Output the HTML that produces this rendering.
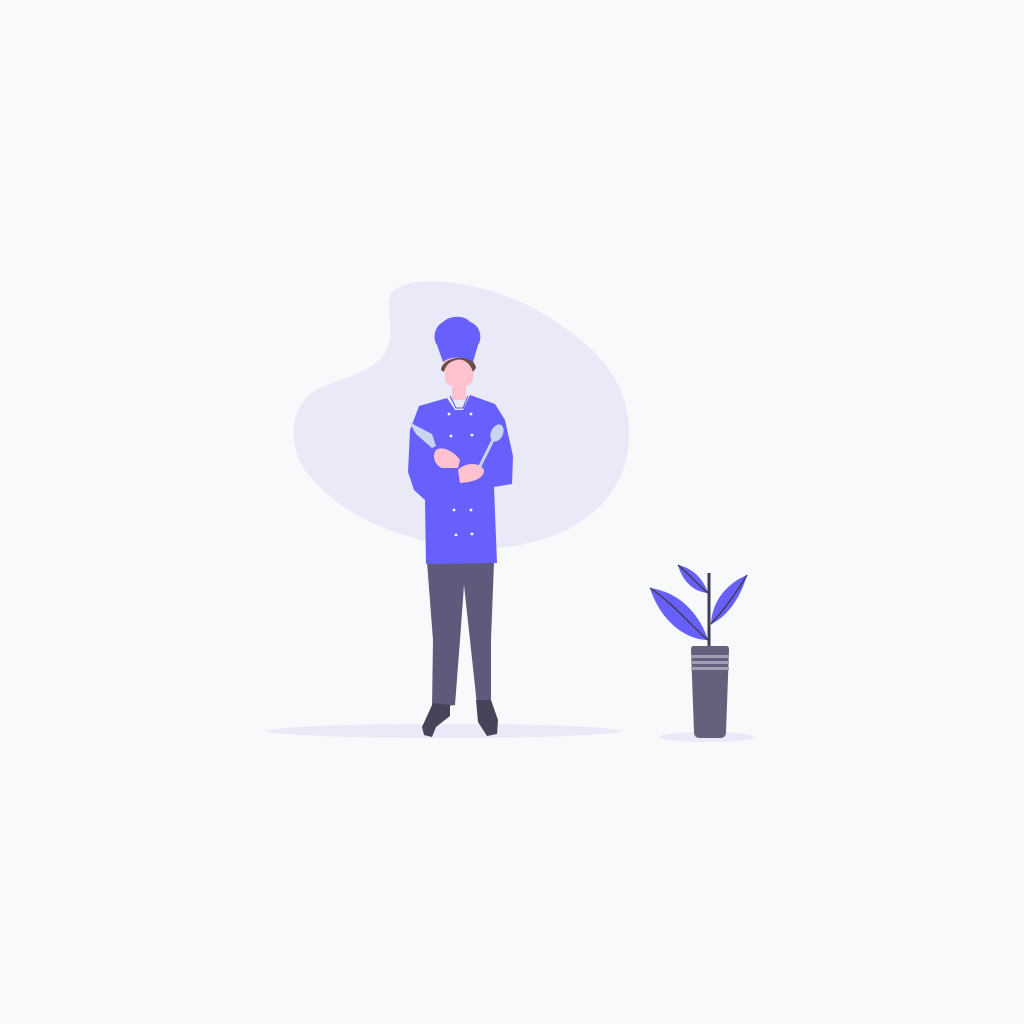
<!DOCTYPE html>
<html><head><style>html,body{margin:0;padding:0;background:#f8f9fa;}svg{display:block}</style></head>
<body>
<svg width="1024" height="1024" viewBox="0 0 1024 1024" xmlns="http://www.w3.org/2000/svg">
<rect width="1024" height="1024" fill="#f8f9fa"/>
<path d="M392,292 C415,272 490,280 550,318 C610,356 635,395 628,450 C620,505 570,540 505,547 C430,552 345,525 305,470 C285,440 292,400 320,388 C350,375 385,370 390,340 C392,318 385,300 392,292Z" fill="#e9e9f8"/>
<ellipse cx="444" cy="731" rx="177" ry="7" fill="#e9e9f8"/>
<ellipse cx="707" cy="737" rx="47" ry="5" fill="#e9e9f8"/>
<!-- pants -->
<path d="M427,562 L494,562 L491,640 L491,700 L477,705 L470,640 L464,585 L460,640 L455,705 L432,708 L433,640 Z" fill="#5d5a7c"/>
<!-- shoes -->
<path d="M433,703 L450,705 L450,716 L436,727 L432,737 L424,735 L422,727 Z" fill="#464458"/>
<path d="M476,700 L491,700 L498,720 L497,734 L487,736 L478,722 Z" fill="#464458"/>
<!-- face -->
<path d="M444,360 C450,352 468,352 474,360 L473,380 C470,390 448,390 445,380 Z" fill="#fdc2cd"/>
<path d="M441,370 C442,356 474,352 476,368 L473,372 C470,362 462,358 456,360 C450,362 446,364 444,372 Z" fill="#6b4e4a"/>
<!-- hat -->
<path d="M443,362 L437,345 C432,338 435,326 443,322 C450,315 465,315 470,322 C480,325 483,338 478,345 L473,362 C465,356 450,356 443,362 Z" fill="#6760fd"/>
<rect x="452" y="385" width="14" height="15" fill="#fdc2cd"/>
<!-- jacket -->
<path d="M447,398 L455,410 L463,410 L470,395 L495,404 L505,420 L513,456 L512,484 L494,487 L497,563 L426,564 L425,500 L414,490 L408,472 L410,430 L419,406 Z" fill="#6760fd"/>
<path d="M450,396 L456,408 L463,408 L468,396" stroke="#5a53e8" stroke-width="1" fill="none"/>
<!-- knife -->
<path d="M409,422 L432,434 L436,446 L432,448 L416,434 Z" fill="#c9d4f0"/>
<!-- spoon -->
<line x1="478" y1="470" x2="493" y2="440" stroke="#c9d4f0" stroke-width="3"/>
<ellipse cx="497" cy="433" rx="6" ry="9" transform="rotate(25 497 433)" fill="#c9d4f0"/>
<!-- arms -->
<path d="M436,450 C442,445 455,452 460,460 L458,468 L442,468 C434,465 432,455 436,450 Z" fill="#fdc2cd"/>
<path d="M458,470 C465,462 480,462 484,470 C484,478 475,482 460,483 Z" fill="#fdc2cd"/>
<g fill="#ffffff">
<circle cx="449" cy="414" r="1.4"/><circle cx="471" cy="414" r="1.4"/>
<circle cx="451" cy="436" r="1.4"/><circle cx="472" cy="435" r="1.4"/>
<circle cx="454" cy="510" r="1.4"/><circle cx="471" cy="510" r="1.4"/>
<circle cx="456" cy="535" r="1.4"/><circle cx="472" cy="534" r="1.4"/>
</g>
<!-- plant -->
<line x1="709" y1="573" x2="709" y2="648" stroke="#3f3d56" stroke-width="3"/>
<path d="M650,588 C680,592 700,615 708,640 C685,640 660,620 650,588Z" fill="#6760fd"/>
<path d="M650,588 C675,605 690,625 708,640" stroke="#3f3d56" stroke-width="1.5" fill="none"/>
<path d="M747,575 C740,600 725,618 711,624 C712,600 728,583 747,575Z" fill="#6760fd"/>
<path d="M747,575 C735,595 722,612 711,624" stroke="#3f3d56" stroke-width="1.5" fill="none"/>
<path d="M678,565 C692,568 703,578 708,593 C695,592 683,583 678,565Z" fill="#6760fd"/>
<path d="M678,565 C690,575 698,585 708,593" stroke="#3f3d56" stroke-width="1.5" fill="none"/>
<path d="M693,646 L727,646 Q729,646 729,650 L726,732 Q726,738 720,738 L700,738 Q694,738 694,732 L691,650 Q691,646 693,646Z" fill="#65617d"/>
<rect x="691" y="655" width="38" height="3" fill="#a09eb5"/>
<rect x="691" y="661" width="38" height="3" fill="#a09eb5"/>
<rect x="691" y="667" width="38" height="3" fill="#a09eb5"/>
</svg>
</body></html>
